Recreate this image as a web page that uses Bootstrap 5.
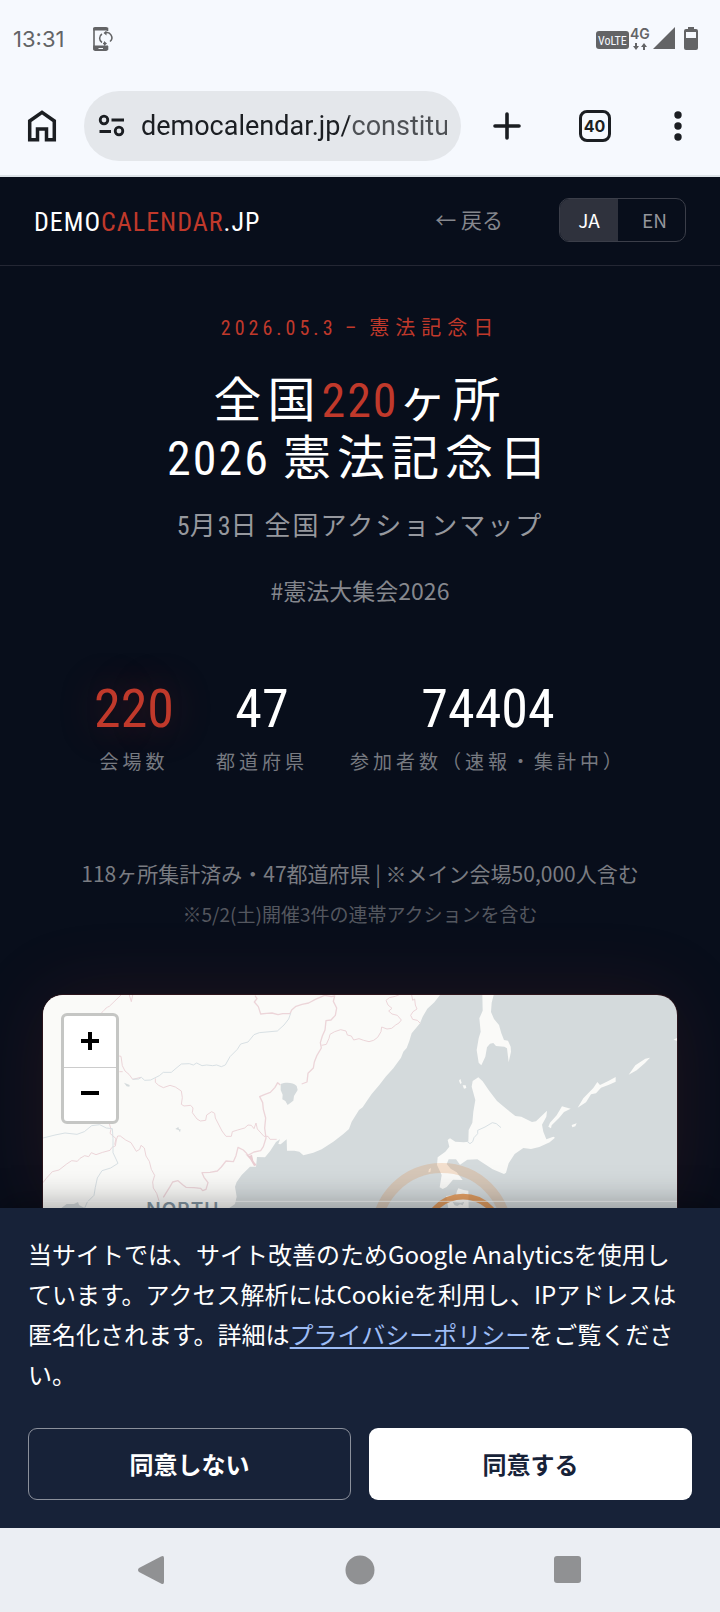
<!DOCTYPE html>
<html lang="ja">
<head>
<meta charset="utf-8">
<meta name="viewport" content="width=device-width, initial-scale=1">
<title>DEMOCALENDAR.JP</title>
<link rel="stylesheet" href="https://cdn.jsdelivr.net/npm/bootstrap@5.3.0/dist/css/bootstrap.min.css">
<style>
  :root { --ink: #080e1b; --accent: #c0392b; --narrow: "Roboto Condensed", "Liberation Sans Narrow", "Noto Sans CJK JP", sans-serif; }
  body { background: var(--ink); color: #fff; font-family: "Noto Sans CJK JP", "Noto Sans", sans-serif; overflow-x: hidden; }
  svg { display: block; }
  .plain { background: none; border: 0; padding: 0; color: inherit; }
  .chrome { background: #f6f9fe; color: #1b1e22; border-bottom: 2px solid #dde3e8; }
  .statusbar { height: 76px; color: #636466; padding: 2px 20px 0 13px; gap: 28px; font-family: Inter, sans-serif; }
  .statusbar svg { overflow: visible; }
  .clock { font-size: 22px; }
  .toolbar { height: 99px; padding: 0 32px 0 26px; }
  .pill { background: #e4e7eb; border-radius: 35px; height: 70px; padding: 0 14px; margin: 0 32px 0 26px; min-width: 0; }
  .pill input { font: 27px/40px Roboto, sans-serif; color: #1b1e22; outline: 0; min-width: 0;
    -webkit-mask-image: linear-gradient(90deg, #000 68%, rgba(0,0,0,.75) 68%); mask-image: linear-gradient(90deg, #000 68%, rgba(0,0,0,.75) 68%); }
  .chrome-actions { width: 195px; }
  .tabcount { width: 32px; height: 32px; border: 3px solid #1b1e22; border-radius: 8px; font: 700 16px/26px Inter, sans-serif; }
  .site-nav { height: 89px; padding: 0 34px 2px; border-bottom: 1px solid #242734; }
  .brand-link { font: 26px/36px var(--narrow); letter-spacing: 1px; color: #fff; text-decoration: none; padding-top: 4px; }
  .red { color: var(--accent); }
  .back-link { font-size: 21px; color: #85878d; text-decoration: none; margin-right: 56px; }
  .lang { border: 1px solid #3b3e49; border-radius: 10px; height: 44px; overflow: hidden; font-size: 19px; }
  .lang button { color: #94969c; width: 67px; padding-left: 6px; }
  .lang button.on { background: #2f323d; color: #fff; width: 58px; padding-left: 0; }
  .eyebrow { font: 20px/30px var(--narrow); letter-spacing: 6px; color: var(--accent); margin: 47px 0 29px; }
  .eyebrow span { letter-spacing: 4px; }
  .headline { font: 48px/58px var(--narrow); letter-spacing: 6px; margin: 0; }
  .headline span { letter-spacing: 2px; }
  .subline { font: 26px/40px var(--narrow); letter-spacing: 2px; color: #96989e; margin: 18px 0 27px; }
  .subline span { letter-spacing: 0; }
  .hashtag { font-size: 23px; line-height: 34px; color: #85878d; margin: 0 0 66px; }
  .stats { gap: 42px; }
  .figure-no { font: 54px/72px var(--narrow); }
  .figure-no.red { text-shadow: 0 0 40px rgba(192,57,43,.4); }
  .figure-label { font-size: 19px; line-height: 28px; letter-spacing: 4px; color: #777a81; margin-top: 2px; white-space: nowrap; }
  .note-a { font-size: 21px; line-height: 32px; color: #7a7c82; margin: 82px 0 10px; }
  .note-b { font-size: 19px; line-height: 30px; color: #54575f; margin: 0 0 66px; }
  .map { margin: 0 43px; min-height: 213px; border-radius: 20px 20px 0 0; background: #d4dadc; box-shadow: 0 0 0 1px rgba(192,57,43,.15), 0 0 80px rgba(192,57,43,.13); }
  .map > svg { position: absolute; inset: 0; width: 100%; height: 100%; border-radius: inherit; }
  .zoom { top: 18px; left: 18px; width: 58px; border: 3px solid #c5c6c4; border-radius: 6px; overflow: hidden; background: #fff; color: #000; }
  .zoom button { height: 51px; display: grid; place-items: center; padding-bottom: 2px; }
  .zoom button + button { border-top: 1px solid #ccc; height: 54px; }
  .cookie { background: #172238; padding: 26px 28px 28px; position: relative; box-shadow: 0 -4px 32px rgba(0,0,0,.35); }
  .cookie p { font-size: 24px; line-height: 40px; margin: 0 0 34px; }
  .cookie a { color: #9dbcf5; text-underline-offset: 3px; }
  .cookie .btn { height: 72px; border-radius: 9px; font-size: 24px; font-weight: 700; }
  .btn-no { border: 1px solid #8b909b; color: #fff; }
  .btn-yes { background: #fff; color: #172238; }
  .sysnav { background: #ebeef3; height: 84px; gap: 178px; position: relative; }
</style>
</head>
<body class="d-flex flex-column min-vh-100">
<header class="chrome">
  <div class="statusbar d-flex align-items-center">
    <span class="clock">13:31</span>
    <svg width="20" height="26" viewBox="0 0 20 26" fill="none" stroke="#636466">
      <path d="M15.500 5V2.500H2V23h13.500v-3" stroke-width="1.600"/>
      <path d="M1.200 4.500V2.500Q1.200 1 3 1h11q2 0 2 1.500v2zM1.200 19.500H16v3.500q0 2-2 2H3.200q-2 0-2-2z" fill="#636466" stroke="none"/><path d="M6.500 22.500h4.500" stroke="#f6f9fe" stroke-width="1"/>
      <path d="M10 16.500A5 5 0 0 1 10 8M13 7a5 5 0 0 1 5 8.500M11 17.500h2" stroke-width="1.500"/><path d="M14.500 4.500v5L11.500 7zM12 15v5l3-2.500z" fill="#636466" stroke="none"/>
    </svg>
    <svg class="ms-auto" width="104" height="28" viewBox="0 0 104 28" fill="#636466">
      <rect x="0" y="6" width="33" height="18" rx="3"/>
      <text x="2" y="20" font-family="Roboto Condensed, sans-serif" font-size="12" fill="#f6f9fe">VoLTE</text>
      <text x="34" y="14" font-family="Inter, sans-serif" font-weight="600" font-size="14">4G</text>
      <path d="M39 18h2v3h2l-3 4-3-4h2zM47 25h2v-3h2l-3-4-3 4h2zM79 2v22H57zM92 2h6v2h2a2 2 0 0 1 2 2v17a2 2 0 0 1-2 2H90a2 2 0 0 1-2-2V6a2 2 0 0 1 2-2h2zM90 7v6h10V7z" fill-rule="evenodd"/>
    </svg>
  </div>
  <div class="toolbar d-flex align-items-center">
    <button class="plain" aria-label="Home"><svg width="32" height="34" viewBox="0 0 32 34" fill="none" stroke="#1b1e22" stroke-width="3.500"><path d="M3.700 12 16 3.300 28.300 12v18.800H20.500V20h-9v10.800H3.700z"/></svg></button>
    <div class="pill d-flex align-items-center flex-grow-1">
      <svg class="flex-shrink-0 me-3" width="27" height="24" viewBox="0 0 27 24" fill="none" stroke="#1b1e22" stroke-width="2.800"><circle cx="6" cy="6" r="3.800"/><circle cx="21" cy="17" r="3.800"/><path d="M13.500 6H26M1.500 17.500H13"/></svg>
      <input class="plain flex-grow-1" type="text" aria-label="URL" value="democalendar.jp/constitution">
    </div>
    <div class="chrome-actions d-flex align-items-center justify-content-between flex-shrink-0">
      <button class="plain" aria-label="New tab"><svg width="28" height="28" viewBox="0 0 28 28" stroke="#1b1e22" stroke-width="3.600" stroke-linecap="round"><path d="M14 2v24M2 14h24"/></svg></button>
      <button class="plain tabcount" aria-label="Tabs">40</button>
      <button class="plain" aria-label="Menu"><svg width="20" height="30" viewBox="0 0 20 30" fill="#1b1e22"><circle cx="10" cy="4" r="3.700"/><circle cx="10" cy="15" r="3.700"/><circle cx="10" cy="26" r="3.700"/></svg></button>
    </div>
  </div>
</header>

<nav class="site-nav d-flex align-items-center">
  <a class="brand-link me-auto" href="#">DEMO<span class="red">CALENDAR</span>.JP</a>
  <a class="back-link" href="#">← 戻る</a>
  <div class="lang d-flex"><button class="plain on">JA</button><button class="plain">EN</button></div>
</nav>

<main class="flex-grow-1 d-flex flex-column text-center">
  <p class="eyebrow"><span>2026.05.3 – </span>憲法記念日</p>
  <h1 class="headline">全国<span class="red">220</span>ヶ所<br><span>2026 </span>憲法記念日</h1>
  <p class="subline"><span>5</span>月<span>3</span>日<span> </span>全国アクションマップ</p>
  <p class="hashtag">#憲法大集会2026</p>
  <div class="stats d-flex justify-content-center">
    <div><div class="figure-no red">220</div><div class="figure-label">会場数</div></div>
    <div><div class="figure-no">47</div><div class="figure-label">都道府県</div></div>
    <div><div class="figure-no">74404</div><div class="figure-label">参加者数（速報・集計中）</div></div>
  </div>
  <p class="note-a">118ヶ所集計済み・47都道府県 | ※メイン会場50,000人含む</p>
  <p class="note-b">※5/2(土)開催3件の連帯アクションを含む</p>
  <div class="map position-relative flex-grow-1">
    <svg viewBox="0 0 1902 639" preserveAspectRatio="xMidYMin slice" aria-hidden="true">
      <g transform="translate(-69 -75)">
        <path fill="#fafaf8" d="M69 75H1260L1243 97 1222 116 1208 140 1200 160 1175 190 1168 213 1160 234 1150 245 1143 263 1120 295 1097 320 1078 345 1055 372 1037 398 1028 412 1017 420 995 455 987 477 970 492 940 515 905 538 880 548 850 556 838 545 823 542 801 542 800 508 782 523 775 522 780 508 768 516 750 544 735 562 711 561 708 590 690 590 665 615 650 636 645 650 650 680 645 702 628 714H69z"/>
        <path fill="#d4dadc" d="M782 342C797 336 820 337 830 348L833 360 822 378 820 392 803 405 796 393 787 388 788 374 782 360zM312 338l17 7-1 5-8-1zM466 477l9-6 2 7 5 0-2 9-4-7zM124 714l16-12 22 0 12-6 3 9 17 9z"/>
        <g fill="none" stroke="#ecd5d9" stroke-width="3" stroke-linejoin="round">
          <path d="M233 136C255 125 250 116 268 109L303 75M328 75l6 20 4-20M291 257l12 2 4 28 8 16 12 10 11 15 25-6M298 305l10 0M406 325v12l10 9 14 7 20-7 16 5 18 12 3 20-3 20 8 5 20-2 7 8-2 14 14 19 10 6 16-2 3-16 15-10 9 5 2 14 20 39 12 16 16 0 3-14 16-5 21-6 10-9 10 1 8 10 6-17 4 18 20 22 12 0 6 9 20 0M69 638l10-13 18-20 20-5 23-18 15-10 17 2 8-9 14-8 12 3 8-12 14 6 20-7 22-6 6-9 10-4 3-18 4-12 8 0 16 12 16 8 16 26 10-6 4-12 10 8 5 24 10 16 6 24 10 18-6 20 2 18 10 16 8 26M265 450l8 28-3 12 18 16-4 18M905 226l14-3 8-18 3-12 14-8 18-6 16 4 4 12 12 3 7 12 16-4 14 5 16 4 14-4 12-9 10-17 2-14 16 6 14-2 12-10 10-6 7-9-12-14-16-4-10-9 10-8-12-10-6-14 10-8 18-4 14-6M1175 75l3 16 6-4 2 18 5 12-12 8-7 11 6 12 14 3 9 9"/>
          <path stroke-width="4" d="M705 77l6 9-8 10 12 14 7 22 18-2 16-1 18 5 14-3 22 0 5-11 13-11 18-6 20-4 20-11 28-12 20 4 10-2-4 16 10 20-4 22-13 14-15 2-3 28-8 18-6 20 3 16-13 22-8 20-3 18-16 16-3 26-16 6M781 345l-8-7-8 14-14 15-16 6-16 7 9 18 2 20 7 26-3 30 4 30-8 26-8 12-20 4-18 10-6-8-8-8-16-8-6 25-8 18-22-2-14 18-12 12-22 4-24 1 6 14 12 16-6 20-10 4-6-7-20-2-24-1-10-8-14-12-16 4-8 14-20 32"/>
        </g>
        <path fill="#e9ccd1" d="M676 552l12 6 8-4 4 18 10 14-8 2-12-20z"/>
        <g fill="none" stroke="#d8e0e4" stroke-width="3">
          <path d="M338 328l18-1 8-5 10 9 18-1 26-13 12-10 24 0 14-12 16-13 24-1 12 4 10-6 16 8 14-2 18 2 12-2 14 5 12-5 14-25 22-22 10-16 22-6 18-22 16-6 54-5 20-18 14-18 6-17M69 504l36-9 30-6 36 4 22-8 22-18 24-3 20 10 18 2 2 30 0 42 15 32-22 14-26 8-14 22-6 28-4 24-20 20-8 18"/>
        </g>
      </g>
      <g transform="translate(951 -75)">
        <path fill="#fafaf8" d="M367 75H401L395 98 393 126 402 147 417 165 424 190 432 210 444 212 452 230 453 245 446 277 441 235 433 230 408 228 400 219 390 221 381 232 376 260 364 286 356 278 350 240 356 205 362 185 358 145 368 122zM355 322L368 334 388 363 411 393 437 415 466 438 484 440 516 456 528 454 561 422 559 440 546 464 550 485 559 508 580 500 585 503 569 517 538 531 513 537 490 534 464 552 446 580 438 608 432 612 398 598 352 568 322 569 300 584 288 568 266 568 260 582 272 596 290 607 308 630 279 629 260 651 248 657 239 652 245 615 231 585 233 562 256 545 268 530 263 510 270 505 286 515 312 517 325 515 326 480 337 458 340 425 346 390 335 350 338 333zM565 470l5-12 20-22 16-27 10 3 16 4-20 10-15 18-22 22-2 9zM653 413l17-28 30-31 12-18 8 9 25-12 22-12v14l-20 9-24 9-15 17-15 3-15 24zM806 314l20-28 30-20 14-3-15 16-25 22zM635 465l15-5-4 9-9 3zM940 209l11-5v8zM297 332l4-6 4 13-4 3zM308 346h9l2 8-7 2zM207 598l6-4-2 12-6 1zM295 655l16 5 14 2 1 53H265l-7-37 30-3 3-12z"/>
        <path fill="#d4dadc" d="M278 696l25 2 10-3-5 11-8-3-8 5-8-2z"/>
        <path fill="none" stroke="#d8e0e4" stroke-width="3" d="M322 515l8 6 8-6 4-12 11-12 0-10 22-10 22-13 12 3 14 12"/>
        <circle cx="245" cy="790" r="196" fill="none" stroke="#de8a45" stroke-opacity=".24" stroke-width="30"/>
        <circle cx="309" cy="795" r="115" fill="none" stroke="#e08436" stroke-opacity=".75" stroke-width="17"/>
      </g>
      <text x="310" y="664" font-family="Inter, sans-serif" font-weight="600" font-size="57" letter-spacing="3" fill="#8395a2">NORTH</text>
      <path stroke="#fff" stroke-opacity=".75" stroke-width="3" d="M0 619H1902"/>
    </svg>
    <div class="zoom position-absolute">
      <button class="plain w-100" aria-label="Zoom in"><svg width="20" height="20" stroke="#000" stroke-width="4"><path d="M10 1v18M1 10h18"/></svg></button>
      <button class="plain w-100" aria-label="Zoom out"><svg width="20" height="20" stroke="#000" stroke-width="4"><path d="M1 9h18"/></svg></button>
    </div>
  </div>
</main>

<section class="cookie">
  <p>当サイトでは、サイト改善のためGoogle Analyticsを使用しています。アクセス解析にはCookieを利用し、IPアドレスは匿名化されます。詳細は<a href="#">プライバシーポリシー</a>をご覧ください。</p>
  <div class="d-flex" style="gap:18px">
    <button class="btn btn-no flex-fill w-50">同意しない</button>
    <button class="btn btn-yes flex-fill w-50">同意する</button>
  </div>
</section>
<footer class="sysnav d-flex align-items-center justify-content-center">
  <button class="plain" aria-label="Back"><svg width="30" height="30" viewBox="0 0 30 30" fill="#909193"><path d="M24 1.500q3-1.500 3 1.500v24q0 3-3 1.500L2 17q-2-2 0-4z"/></svg></button>
  <button class="plain" aria-label="Home screen"><svg width="30" height="30" fill="#909193"><circle cx="15" cy="15" r="14.500"/></svg></button>
  <button class="plain" aria-label="Recent apps"><svg width="30" height="30" fill="#909193"><rect x="1" y="1" width="27" height="27" rx="3"/></svg></button>
</footer>
<script src="https://cdn.jsdelivr.net/npm/bootstrap@5.3.0/dist/js/bootstrap.bundle.min.js"></script>
</body>
</html>
